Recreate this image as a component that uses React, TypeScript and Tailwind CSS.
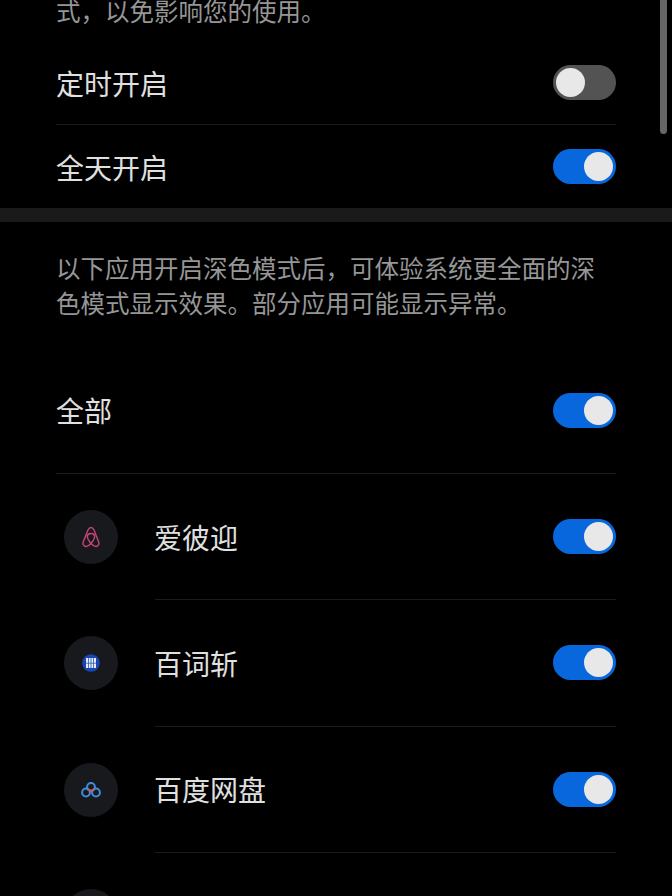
import type { ReactNode } from 'react'

function Toggle({ on = true }: { on?: boolean }) {
  return (
    <div
      className={`flex h-[35px] w-[63px] shrink-0 items-center rounded-full px-[3px] ${
        on ? 'justify-end bg-[#0867dc]' : 'justify-start bg-[#535353]'
      }`}
    >
      <div className="h-[29px] w-[29px] rounded-full bg-[#e8e8e8]" />
    </div>
  )
}

function AirbnbIcon() {
  return (
    <svg width="20" height="22" viewBox="0 0 20 22" fill="none" stroke="#c8447a" strokeWidth="1.4">
      <path d="M10 17.5C7.5 14.5 6.4 12.6 6.4 10.8c0-2 1.5-3.3 3.6-3.3s3.6 1.3 3.6 3.3c0 1.8-1.1 3.7-3.6 6.7 2.2 2.4 4.2 3.4 5.8 2.8 1.9-.7 2.6-2.6 1.8-4.6L13 4C12.1 2.2 11.3 1.5 10 1.5S7.9 2.2 7 4L2.3 15.7c-.8 2 0 3.9 1.8 4.6 1.6.6 3.7-.4 5.9-2.8z" />
    </svg>
  )
}

function BaicizhanIcon() {
  return (
    <svg width="20" height="20" viewBox="0 0 20 20">
      <circle cx="10" cy="10" r="8.8" fill="#1a45b2" />
      <rect x="5" y="5" width="10" height="10" fill="#e6ecf8" />
      <path d="M7.5 5v10M10 5v10M12.5 5v10M5 10.2h10" stroke="#2a55bd" strokeWidth="0.8" />
    </svg>
  )
}

function BaiduIcon() {
  return (
    <svg width="20" height="16" viewBox="0 0 20 16" fill="none" strokeWidth="2">
      <circle cx="5" cy="10.5" r="3.9" stroke="#3d8fdc" />
      <circle cx="15" cy="10.5" r="3.9" stroke="#3d8fdc" />
      <circle cx="10" cy="5" r="3.9" stroke="#3d8fdc" />
      <path d="M6.8 7.4c1.8 1.2 4.6 1.2 6.4 0" stroke="#d8505c" />
    </svg>
  )
}

function AppIcon({ children }: { children?: ReactNode }) {
  return (
    <div className="flex h-[54px] w-[54px] shrink-0 items-center justify-center rounded-full bg-[#17191d]">
      {children}
    </div>
  )
}

function AppRow({ name, icon }: { name: string; icon: ReactNode }) {
  return (
    <div className="flex items-center">
      <div className="ml-[8px] w-[91px] shrink-0">
        <AppIcon>{icon}</AppIcon>
      </div>
      <div className="flex h-[126.33px] flex-1 items-center justify-between border-b border-[#1c1c1c]">
        <span className="ml-[-1px] text-[28px] text-[#e0e0e0]">{name}</span>
        <Toggle />
      </div>
    </div>
  )
}

const apps = [
  { name: '爱彼迎', icon: <AirbnbIcon /> },
  { name: '百词斩', icon: <BaicizhanIcon /> },
  { name: '百度网盘', icon: <BaiduIcon /> },
]

export default function App() {
  return (
    <div className="relative h-[896px] w-[672px] overflow-hidden bg-black font-['Noto_Sans_CJK_SC','Noto_Sans',sans-serif]">
      {/* overlay scrollbar */}
      <div className="absolute right-[5px] top-0 h-[134px] w-[7px] rounded-b-full bg-[#666666]" />

      <div className="mt-[-7px] pl-[56px] pr-[56px]">
        <p className="text-[24.5px] leading-[35px] text-[#969696]">式，以免影响您的使用。</p>
        <div className="mt-[13px] flex h-[84px] items-center justify-between border-b border-[#1c1c1c]">
          <span className="text-[28px] text-[#e0e0e0]">定时开启</span>
          <Toggle on={false} />
        </div>
        <div className="flex h-[83px] items-center justify-between">
          <span className="text-[28px] text-[#e0e0e0]">全天开启</span>
          <Toggle />
        </div>
      </div>

      <div className="h-[14px] bg-[#1a1a1a]" />

      <div className="px-[56px]">
        <p className="mt-[28px] text-[24.5px] leading-[35px] text-[#969696]">
          以下应用开启深色模式后，可体验系统更全面的深色模式显示效果。部分应用可能显示异常。
        </p>
        <div className="mt-[27px] flex h-[127px] items-center justify-between border-b border-[#1c1c1c]">
          <span className="text-[28px] text-[#e0e0e0]">全部</span>
          <Toggle />
        </div>
        {apps.map((app) => (
          <AppRow key={app.name} name={app.name} icon={app.icon} />
        ))}
        <div className="ml-[8px] mt-[36px]">
          <AppIcon />
        </div>
      </div>
    </div>
  )
}
